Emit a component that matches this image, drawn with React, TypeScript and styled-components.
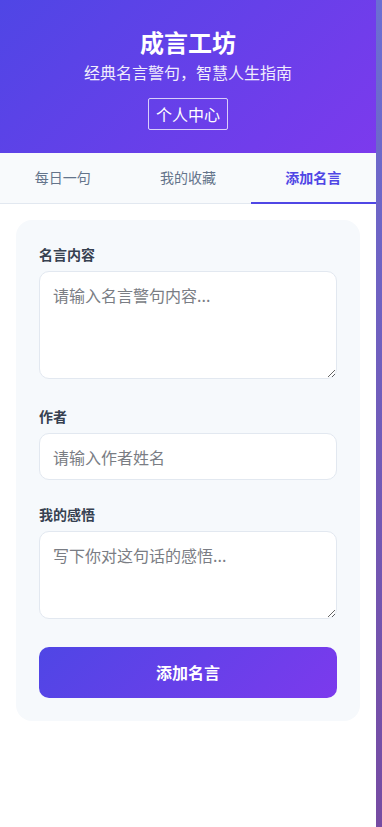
import React, { useState } from 'react';
import styled, { createGlobalStyle } from 'styled-components';

const GlobalStyle = createGlobalStyle`
  * { box-sizing: border-box; }
  body {
    margin: 0;
    min-height: 100vh;
    background: linear-gradient(135deg, #667eea 0%, #764ba2 100%);
    font-family: "Noto Sans CJK SC", "Noto Sans", sans-serif;
  }
`;

const tabs = ['每日一句', '我的收藏', '添加名言'];

const App = () => {
  const [active, setActive] = useState(2);

  return (
    <>
      <GlobalStyle />
      <Page>
        <Header>
          <Title>成言工坊</Title>
          <Subtitle>经典名言警句，智慧人生指南</Subtitle>
          <ProfileButton>个人中心</ProfileButton>
        </Header>
        <TabBar>
          {tabs.map((t, i) => (
            <Tab key={t} $active={i === active} onClick={() => setActive(i)}>
              {t}
            </Tab>
          ))}
        </TabBar>
        <Content>
          <Card>
            <Field>
              <Label>名言内容</Label>
              <TextArea $height={108} placeholder="请输入名言警句内容..." />
            </Field>
            <Field>
              <Label>作者</Label>
              <Input placeholder="请输入作者姓名" />
            </Field>
            <Field>
              <Label>我的感悟</Label>
              <TextArea $height={88} placeholder="写下你对这句话的感悟..." />
            </Field>
            <SubmitButton>添加名言</SubmitButton>
          </Card>
        </Content>
      </Page>
    </>
  );
};

const Page = styled.div`
  width: 376px;
  min-height: 100vh;
  background: #fff;
`;

const Header = styled.header`
  display: flex;
  flex-direction: column;
  align-items: center;
  padding: 24px 20px 23px;
  background: linear-gradient(135deg, #4f46e5 0%, #7c3aed 100%);
  color: #fff;
`;

const Title = styled.h1`
  margin: 0 0 2px;
  font-size: 24px;
  font-weight: 700;
  line-height: 35px;
`;

const Subtitle = styled.p`
  margin: 0 0 14px;
  font-size: 16px;
  line-height: 23px;
  opacity: 0.9;
`;

const ProfileButton = styled.button`
  padding: 3px 7px;
  font-family: inherit;
  font-size: 16px;
  line-height: 24px;
  color: #fff;
  background: transparent;
  border: 1px solid rgba(255, 255, 255, 0.75);
  border-radius: 2px;
  cursor: pointer;
`;

const TabBar = styled.nav`
  display: flex;
  background: #f8fafc;
  border-bottom: 1px solid #e2e8f0;
`;

const Tab = styled.button<{ $active: boolean }>`
  flex: 1;
  padding: 14px 0;
  font-family: inherit;
  font-size: 14px;
  line-height: 21px;
  font-weight: ${p => (p.$active ? 600 : 400)};
  color: ${p => (p.$active ? '#4f46e5' : '#64748b')};
  background: transparent;
  border: none;
  border-bottom: 2px solid ${p => (p.$active ? '#4f46e5' : 'transparent')};
  margin-bottom: -1px;
  cursor: pointer;
`;

const Content = styled.main`
  padding: 16px;
`;

const Card = styled.div`
  padding: 25px 23px 23px;
  background: #f6f9fc;
  border-radius: 16px;
`;

const Field = styled.div`
  display: flex;
  flex-direction: column;
  margin-bottom: 25px;
`;

const Label = styled.label`
  display: block;
  margin-bottom: 8px;
  font-size: 14px;
  line-height: 18px;
  font-weight: 700;
  color: #374151;
`;

const fieldBase = `
  display: block;
  width: 100%;
  padding: 12px 13px;
  font-family: inherit;
  font-size: 16px;
  line-height: 23px;
  color: #1f2937;
  background: #fff;
  border: 1px solid #e2e8f0;
  border-radius: 10px;
  outline: none;
  &::placeholder { color: #7a7d84; }
`;

const TextArea = styled.textarea<{ $height: number }>`
  ${fieldBase}
  height: ${p => p.$height}px;
  margin-bottom: 3px;
`;

const Input = styled.input`
  ${fieldBase}
  height: 47px;
`;

const SubmitButton = styled.button`
  display: block;
  width: 100%;
  padding: 14px;
  font-family: inherit;
  font-size: 16px;
  line-height: 23px;
  font-weight: 700;
  color: #fff;
  background: linear-gradient(135deg, #4f46e5 0%, #7c3aed 100%);
  border: none;
  border-radius: 10px;
  cursor: pointer;
`;

export default App;
